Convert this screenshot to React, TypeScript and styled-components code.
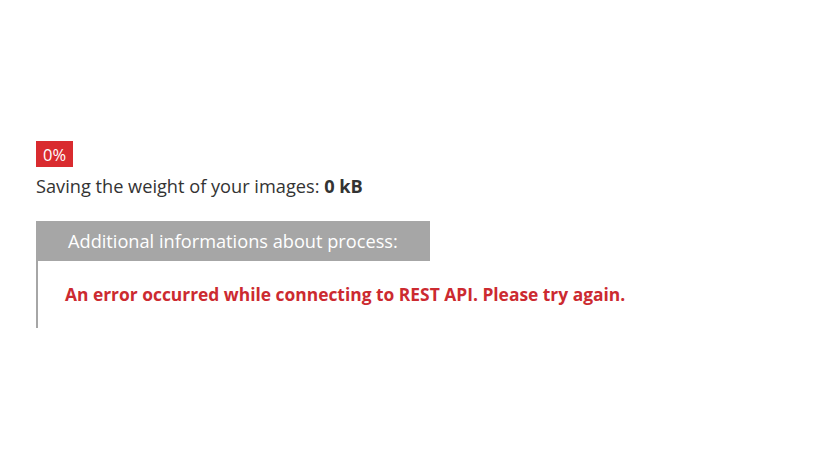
import React from "react";
import styled, { createGlobalStyle } from "styled-components";

const Global = createGlobalStyle`
  html, body { margin: 0; padding: 0; background: #fff; }
  body { font-family: "Open Sans", "Noto Sans", sans-serif; }
`;

const Page = styled.div`
  padding: 141px 0 0 36px;
`;

const Badge = styled.div`
  display: inline-flex;
  align-items: center;
  justify-content: center;
  height: 26px;
  width: 37px;
  background: #d92b2f;
  color: #fff;
  font-size: 16.5px;
  box-sizing: border-box;
`;

const Summary = styled.div`
  margin-top: 6px;
  font-size: 18.2px;
  color: #333;
  line-height: 26px;
  b { font-weight: 700; }
`;

const Panel = styled.div`
  margin-top: 22px;
  width: 394px;
`;

const PanelHeader = styled.div`
  height: 40px;
  background: #a6a6a6;
  color: #fff;
  font-size: 18.2px;
  display: flex;
  align-items: center;
  padding-left: 32px;
`;

const PanelBody = styled.div`
  border-left: 2px solid #a6a6a6;
  height: 67px;
  display: flex;
  align-items: center;
  padding-left: 27px;
  padding-bottom: 2px;
  box-sizing: border-box;
`;

const ErrorText = styled.div`
  color: #cc2a30;
  font-weight: 700;
  font-size: 17.4px;
  white-space: nowrap;
`;

export default function App() {
  return (
    <>
      <Global />
      <Page>
        <Badge>0%</Badge>
        <Summary>
          Saving the weight of your images: <b>0 kB</b>
        </Summary>
        <Panel>
          <PanelHeader>Additional informations about process:</PanelHeader>
          <PanelBody>
            <ErrorText>
              An error occurred while connecting to REST API. Please try again.
            </ErrorText>
          </PanelBody>
        </Panel>
      </Page>
    </>
  );
}
